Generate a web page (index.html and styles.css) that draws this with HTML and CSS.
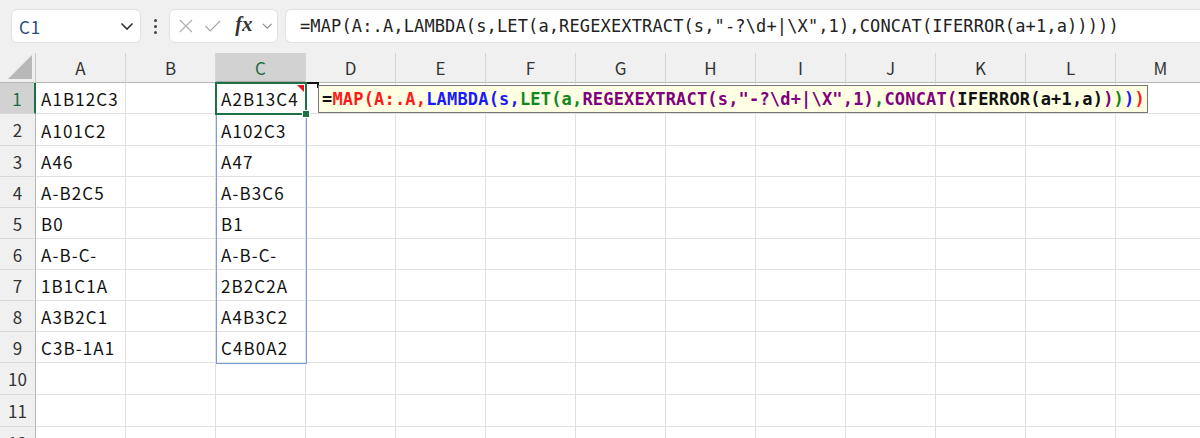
FILE: index.html
```html
<!DOCTYPE html>
<html lang="ja">
<head>
<meta charset="utf-8">
<title>Excel</title>
<link rel="stylesheet" href="styles.css">
</head>
<body>
<div class="app">
  <div class="toolbar">
    <div class="namebox">
      <span class="name">C1</span>
      <svg class="chev" width="14" height="9" viewBox="0 0 14 9"><path d="M1.5 1.5 L7 7 L12.5 1.5" fill="none" stroke="#333" stroke-width="1.6"/></svg>
    </div>
    <div class="dots"><i></i><i></i><i></i></div>
    <div class="fxbox">
      <svg width="18" height="18" viewBox="0 0 18 18"><path d="M2 2 L16 16 M16 2 L2 16" stroke="#a8a8a8" stroke-width="1.4" fill="none"/></svg>
      <svg width="20" height="16" viewBox="0 0 20 16"><path d="M1.5 8 L7 13.5 L18.5 2" stroke="#a8a8a8" stroke-width="1.4" fill="none"/></svg>
      <span class="fx">f<span class="fxx">x</span></span>
      <svg width="12" height="8" viewBox="0 0 12 8"><path d="M1 1.5 L6 6.5 L11 1.5" fill="none" stroke="#888" stroke-width="1.2"/></svg>
    </div>
    <div class="formulabar">=MAP(A:.A,LAMBDA(s,LET(a,REGEXEXTRACT(s,"-?\d+|\X",1),CONCAT(IFERROR(a+1,a)))))</div>
  </div>
  <div class="sheet">
    <div class="grid">
      <div class="ch corner"><svg width="24" height="24" viewBox="0 0 24 24"><path d="M24 0 L24 24 L0 24 Z" fill="#b8b8b8"/></svg></div>
      <div class="ch">A</div><div class="ch">B</div><div class="ch sel">C</div><div class="ch">D</div><div class="ch">E</div><div class="ch">F</div><div class="ch">G</div><div class="ch">H</div><div class="ch">I</div><div class="ch">J</div><div class="ch">K</div><div class="ch">L</div><div class="ch">M</div>

      <div class="rh sel">1</div><div class="c">A1B12C3</div><div class="c"></div><div class="c">A2B13C4</div><div class="c"></div><div class="c"></div><div class="c"></div><div class="c"></div><div class="c"></div><div class="c"></div><div class="c"></div><div class="c"></div><div class="c"></div><div class="c"></div>
      <div class="rh">2</div><div class="c">A101C2</div><div class="c"></div><div class="c">A102C3</div><div class="c"></div><div class="c"></div><div class="c"></div><div class="c"></div><div class="c"></div><div class="c"></div><div class="c"></div><div class="c"></div><div class="c"></div><div class="c"></div>
      <div class="rh">3</div><div class="c">A46</div><div class="c"></div><div class="c">A47</div><div class="c"></div><div class="c"></div><div class="c"></div><div class="c"></div><div class="c"></div><div class="c"></div><div class="c"></div><div class="c"></div><div class="c"></div><div class="c"></div>
      <div class="rh">4</div><div class="c">A-B2C5</div><div class="c"></div><div class="c">A-B3C6</div><div class="c"></div><div class="c"></div><div class="c"></div><div class="c"></div><div class="c"></div><div class="c"></div><div class="c"></div><div class="c"></div><div class="c"></div><div class="c"></div>
      <div class="rh">5</div><div class="c">B0</div><div class="c"></div><div class="c">B1</div><div class="c"></div><div class="c"></div><div class="c"></div><div class="c"></div><div class="c"></div><div class="c"></div><div class="c"></div><div class="c"></div><div class="c"></div><div class="c"></div>
      <div class="rh">6</div><div class="c">A-B-C-</div><div class="c"></div><div class="c">A-B-C-</div><div class="c"></div><div class="c"></div><div class="c"></div><div class="c"></div><div class="c"></div><div class="c"></div><div class="c"></div><div class="c"></div><div class="c"></div><div class="c"></div>
      <div class="rh">7</div><div class="c">1B1C1A</div><div class="c"></div><div class="c">2B2C2A</div><div class="c"></div><div class="c"></div><div class="c"></div><div class="c"></div><div class="c"></div><div class="c"></div><div class="c"></div><div class="c"></div><div class="c"></div><div class="c"></div>
      <div class="rh">8</div><div class="c">A3B2C1</div><div class="c"></div><div class="c">A4B3C2</div><div class="c"></div><div class="c"></div><div class="c"></div><div class="c"></div><div class="c"></div><div class="c"></div><div class="c"></div><div class="c"></div><div class="c"></div><div class="c"></div>
      <div class="rh">9</div><div class="c">C3B-1A1</div><div class="c"></div><div class="c">C4B0A2</div><div class="c"></div><div class="c"></div><div class="c"></div><div class="c"></div><div class="c"></div><div class="c"></div><div class="c"></div><div class="c"></div><div class="c"></div><div class="c"></div>
      <div class="rh">10</div><div class="c"></div><div class="c"></div><div class="c"></div><div class="c"></div><div class="c"></div><div class="c"></div><div class="c"></div><div class="c"></div><div class="c"></div><div class="c"></div><div class="c"></div><div class="c"></div><div class="c"></div>
      <div class="rh">11</div><div class="c"></div><div class="c"></div><div class="c"></div><div class="c"></div><div class="c"></div><div class="c"></div><div class="c"></div><div class="c"></div><div class="c"></div><div class="c"></div><div class="c"></div><div class="c"></div><div class="c"></div>
      <div class="rh">12</div><div class="c"></div><div class="c"></div><div class="c"></div><div class="c"></div><div class="c"></div><div class="c"></div><div class="c"></div><div class="c"></div><div class="c"></div><div class="c"></div><div class="c"></div><div class="c"></div><div class="c"></div>
    </div>
    <div class="spill"></div>
    <div class="active"><span class="flag"></span><span class="handle"></span></div>
    <div class="pointer"></div>
    <div class="tip"><span class="k">=</span><span class="r">MAP(A:.A,</span><span class="b">LAMBDA(s,</span><span class="g">LET(a,</span><span class="p">REGEXEXTRACT(s,"-?\d+|\X",1)</span><span class="g">,</span><span class="p">CONCAT(</span><span class="k">IFERROR(a+1,a)</span><span class="p">)</span><span class="g">)</span><span class="b">)</span><span class="r">)</span></div>
  </div>
</div>
</body>
</html>
```
FILE: styles.css
```css
* { box-sizing: border-box; }
html, body { margin: 0; padding: 0; }
body { width: 1200px; height: 438px; overflow: hidden; background: #fff; font-family: "Noto Sans CJK JP", "Noto Sans", sans-serif; }
.app { width: 1200px; height: 438px; overflow: hidden; }

.toolbar {
  height: 53px; background: #f0f0f0;
  display: flex; align-items: flex-start; padding: 9px 0 0 11px; gap: 0;
}
.namebox {
  width: 130px; height: 34px; background: #fff; border: 1px solid #e1e1e1; border-radius: 6px;
  display: flex; align-items: center; justify-content: space-between; padding: 0 6px 0 7px;
}
.name { font-family: "Noto Sans CJK JP", sans-serif; font-size: 17px; letter-spacing: 0.8px; color: #2b4a7a; }
.dots { width: 28px; height: 34px; display: flex; flex-direction: column; align-items: center; justify-content: center; gap: 3px; }
.dots i { display: block; width: 3px; height: 3px; background: #444; border-radius: 50%; }
.fxbox {
  width: 109px; height: 34px; background: #fff; border: 1px solid #e1e1e1; border-radius: 6px;
  display: flex; align-items: center; padding: 0 4px 0 8px; gap: 10px;
}
.fx { font-family: "Liberation Serif", serif; font-style: italic; font-weight: bold; font-size: 20px; color: #333; margin-left: 4px; margin-top: -3px; }
.fxx { font-size: 21px; }
.formulabar {
  margin-left: 7px; flex: 1; height: 34px; background: #fff; border: 1px solid #e1e1e1; border-right: none;
  border-radius: 6px 0 0 6px; padding: 0 0 0 14px;
  font-family: "DejaVu Sans Mono", monospace; font-size: 17px; letter-spacing: 0.13px; color: #222;
  line-height: 32px; white-space: nowrap;
}

.sheet { position: relative; }
.grid {
  display: grid;
  grid-template-columns: 36px repeat(13, 90px);
  grid-template-rows: 30px 31px 32px 31px 31px 31px 31px 31px 31px 31px 32px 32px 31px;
}
.ch {
  background: #f0f0f0; border-right: 1px solid #d4d4d4; border-bottom: 1px solid #b6b6b6;
  display: flex; align-items: center; justify-content: center;
  font-size: 17px; color: #333; font-family: "Noto Sans CJK JP", sans-serif;
}
.ch.corner { justify-content: flex-end; align-items: flex-end; padding: 0 3px 3px 0; border-right-color: #c8c8c8; }
.ch.sel { background: #d2d2d2; color: #1d6b43; border-bottom: 2px solid #a9a9a9; }
.rh {
  background: #f0f0f0; border-right: 1px solid #b6b6b6; border-bottom: 1px solid #d8d8d8;
  display: flex; align-items: center; justify-content: center;
  font-size: 17px; color: #333;
}
.rh.sel { background: #d2d2d2; color: #1d6b43; border-right: 2px solid #1e7145; }
.c {
  border-right: 1px solid #e1e1e1; border-bottom: 1px solid #e1e1e1;
  display: flex; align-items: center; padding: 1px 0 0 5px;
  font-size: 17px; letter-spacing: 1.1px; color: #111; white-space: nowrap; overflow: hidden;
}

.spill { position: absolute; left: 216px; top: 60px; width: 91px; height: 251px; border: 1px solid #7b9ed8; }
.active { position: absolute; left: 215px; top: 29px; width: 92px; height: 33px; border: 2px solid #1e7145; }
.flag { position: absolute; right: 1px; top: 1px; width: 0; height: 0; border-top: 7px solid #e8141b; border-left: 7px solid transparent; }
.handle { position: absolute; right: -5px; bottom: -5px; width: 8px; height: 8px; background: #1e7145; border: 1px solid #fff; }
.pointer { position: absolute; left: 307px; top: 29px; width: 12px; height: 6px; border-top: 2px solid #111; border-right: 2px solid #111; }
.tip {
  position: absolute; left: 318px; top: 32px; width: 830px; height: 28px;
  background: #ffffe3; border: 1px solid #767676; padding: 0 0 0 3px;
  font-family: "DejaVu Sans Mono", monospace; font-weight: bold; font-size: 17px; letter-spacing: 0.18px;
  line-height: 26px; white-space: nowrap;
}
.k { color: #111; }
.r { color: #ff1a1a; }
.b { color: #1a1aff; }
.g { color: #11881e; }
.p { color: #800080; }
```
